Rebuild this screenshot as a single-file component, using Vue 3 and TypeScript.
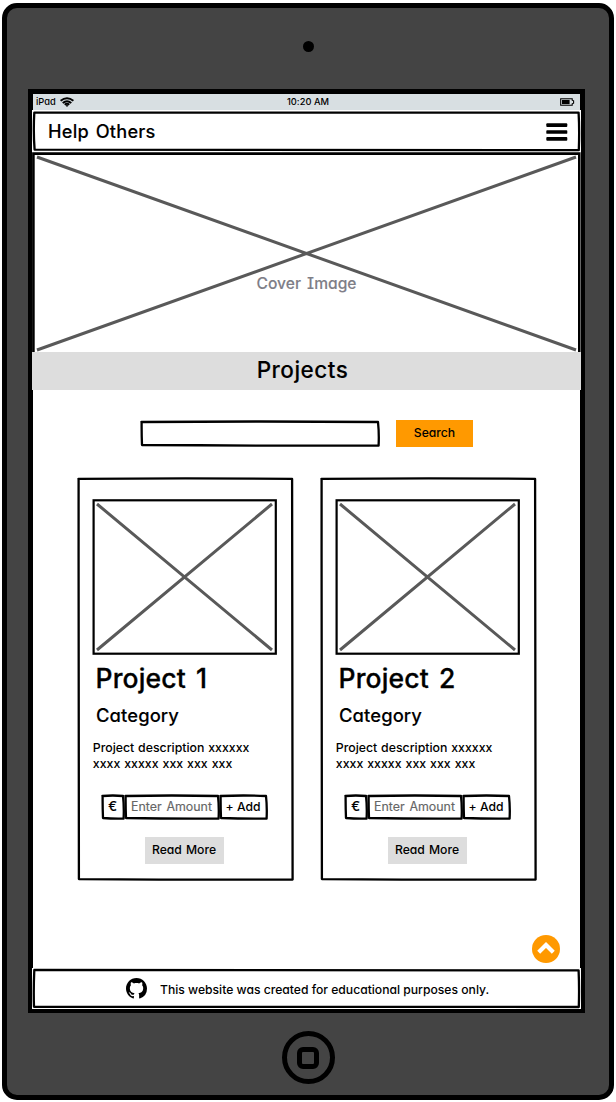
<script setup lang="ts">
interface Project {
  title: string
  category: string
  lines: string[]
}

const projects: Project[] = [
  { title: 'Project 1', category: 'Category', lines: ['Project description xxxxxx', 'xxxx xxxxx xxx xxx xxx'] },
  { title: 'Project 2', category: 'Category', lines: ['Project description xxxxxx', 'xxxx xxxxx xxx xxx xxx'] },
]

// Slightly uneven rectangle, like a hand-drawn frame.
function frame(w: number, h: number, wobble = 0.6): string {
  const k = wobble
  const r = w - 1.4
  const b = h - 1.4
  return [
    `M1.4 ${1.4 + k}`,
    `Q${w * 0.5} ${1.2 - k * 0.4} ${r - k} ${1.4 + k}`,
    `Q${r + k} ${h * 0.5} ${r} ${b}`,
    `Q${w * 0.5} ${b + k * 0.5} ${1.4 + k} ${b - k}`,
    `Q${1.4 + k * 0.2} ${h * 0.5} ${1.4 + k * 0.4} ${1.4 + k}Z`,
  ].join('')
}
</script>

<template>
  <div class="device">
    <div class="camera"></div>
    <div class="screen">
      <div class="status">
        <span class="carrier">iPad</span>
        <svg class="wifi" width="14" height="10" viewBox="0 0 14 10">
          <g fill="none" stroke="#000" stroke-width="1.9">
            <path d="M.6 3.8Q7-1.3 13.4 3.8" />
            <path d="M2.7 5.9Q7 2.4 11.3 5.9" />
            <path d="M4.7 7.8Q7 5.9 9.3 7.8" />
          </g>
          <path d="M5.6 8.4Q7 7.5 8.4 8.4L7 9.9Z" />
        </svg>
        <span class="clock">10:20 AM</span>
        <svg class="battery" width="15" height="8" viewBox="0 0 15 8">
          <path d="M1 .7H12.2V2.2L13.6 2.8V5.2L12.2 5.8V7.3H.7V.7Z" fill="none" stroke="#000" stroke-width="1.1" />
          <rect x="2" y="1.9" width="7.6" height="4.2" />
        </svg>
      </div>

      <header class="bar">
        <svg class="frame" width="549" height="42">
          <path d="M2.3 2.6Q270 1.6 546.6 2.6Q547.6 20 546.8 40.2Q270 41 2.6 39.6Q1.2 22 2.3 2.6Z" />
        </svg>
        <h1 class="brand">Help Others</h1>
        <svg class="burger" width="22" height="18" viewBox="0 0 22 18">
          <rect x=".3" y=".3" width="21" height="3.6" rx=".9" />
          <rect x=".3" y="7.2" width="21" height="3.6" rx=".9" />
          <rect x=".3" y="14.1" width="21" height="3.6" rx=".9" />
        </svg>
      </header>

      <section class="cover">
        <svg class="cross" width="549" height="200">
          <path class="edge" d="M1.4 200V1.6H547.3V200" />
          <path d="M5 5L544 198M5 198L544 5" />
        </svg>
        <span class="cover-label">Cover Image</span>
      </section>

      <h2 class="band"><span>Projects</span></h2>

      <form class="search" @submit.prevent>
        <div class="field">
          <svg class="frame" width="240" height="27"><path :d="frame(240, 27, 0.6)" /></svg>
        </div>
        <button class="go" type="submit"><span>Search</span></button>
      </form>

      <main class="cards">
        <article v-for="p in projects" :key="p.title" class="card">
          <svg class="frame" width="217" height="404"><path :d="frame(217, 404, 0.5)" /></svg>
          <svg class="thumb" width="185" height="156">
            <rect x="1.6" y="1.3" width="182.2" height="153.4" />
            <path d="M5 5L180 151M5 151L180 5" />
          </svg>
          <h3 class="title">{{ p.title }}</h3>
          <h4 class="category">{{ p.category }}</h4>
          <p class="text">
            <span v-for="(line, i) in p.lines" :key="i" :class="['line', { xs: i > 0 }]">{{ line }}</span>
          </p>
          <div class="donate">
            <span class="cell euro">
              <svg class="frame" width="24" height="26"><path :d="frame(24, 26, 0.6)" /></svg>€
            </span>
            <span class="cell amount">
              <svg class="frame" width="96" height="26"><path :d="frame(96, 26, 0.6)" /></svg>Enter Amount
            </span>
            <span class="cell add">
              <svg class="frame" width="49" height="26"><path :d="frame(49, 26, 0.6)" /></svg>+ Add
            </span>
          </div>
          <button class="more" type="button"><span>Read More</span></button>
        </article>
      </main>

      <button class="top" type="button" aria-label="Back to top">
        <svg width="28" height="28" viewBox="0 0 28 28">
          <circle cx="14" cy="14" r="14" fill="#ff9900" />
          <path d="M6.7 17.2L14 10L21.3 17.2" fill="none" stroke="#fff" stroke-width="4.2" />
        </svg>
      </button>

      <footer class="foot">
        <svg class="frame" width="549" height="41">
          <path d="M2.3 2Q270 1.4 546.6 2.4Q547.4 20 546.8 39Q270 40 2 38.8Q1.4 22 2.3 2Z" />
        </svg>
        <svg class="github" width="21" height="21" viewBox="0 0 16 16">
          <path d="M8 0C3.58 0 0 3.58 0 8c0 3.54 2.29 6.53 5.47 7.59.4.07.55-.17.55-.38 0-.19-.01-.82-.01-1.49-2.01.37-2.53-.49-2.69-.94-.09-.23-.48-.94-.82-1.13-.28-.15-.68-.52-.01-.53.63-.01 1.08.58 1.23.82.72 1.21 1.87.87 2.33.66.07-.52.28-.87.51-1.07-1.78-.2-3.64-.89-3.64-3.95 0-.87.31-1.59.82-2.15-.08-.2-.36-1.02.08-2.12 0 0 .67-.21 2.2.82.64-.18 1.32-.27 2-.27s1.36.09 2 .27c1.53-1.04 2.2-.82 2.2-.82.44 1.1.16 1.92.08 2.12.51.56.82 1.27.82 2.15 0 3.07-1.87 3.75-3.65 3.95.29.25.54.73.54 1.48 0 1.07-.01 1.93-.01 2.2 0 .21.15.46.55.38A8.01 8.01 0 0 0 16 8c0-4.42-3.58-8-8-8z" />
        </svg>
        <span class="note">This website was created for educational purposes only.</span>
      </footer>
    </div>
    <div class="home"><div class="home-square"></div></div>
  </div>
</template>

<style>
body {
  background: #fff;
}
</style>

<style scoped>
.device {
  box-sizing: border-box;
  width: 612px;
  height: 1097px;
  margin: 3px 0 0 2px;
  border: 5px solid #000;
  border-radius: 15px;
  background: #444;
  display: flex;
  flex-direction: column;
  align-items: center;
  color: #000;
  font-family: Inter, "Open Sans", sans-serif;
  font-feature-settings: "cv11", "cv08", "calt" 0;
  font-weight: 500;
  white-space: nowrap;
}
.device * {
  box-sizing: border-box;
}
h1, h2, h3, h4, p {
  margin: 0;
  font-weight: 500;
}
button {
  border: 0;
  padding: 0;
  color: inherit;
  font: inherit;
  font-feature-settings: inherit;
}
.camera {
  width: 11px;
  height: 11px;
  margin: 33px 0 0;
  border-radius: 50%;
  background: #000;
}
.screen {
  width: 557px;
  height: 924px;
  margin: 37px 0 0 -3px;
  border: 5px solid #000;
  background: #fff;
  display: flex;
  flex-direction: column;
  align-items: center;
}
.frame {
  position: absolute;
  left: 0;
  top: 0;
  fill: none;
  stroke: #000;
  stroke-width: 2.3;
  stroke-linejoin: round;
}
.status {
  width: 547px;
  height: 16px;
  flex: none;
  background: #d8dfe2;
  display: flex;
  align-items: center;
  padding: 0 5px 0 3px;
  font-size: 9.3px;
  line-height: 16px;
}
.carrier {
  width: 19px;
}
.wifi {
  margin-left: 5px;
}
.clock {
  margin-left: 213px;
}
.battery {
  margin-left: auto;
}
.bar {
  position: relative;
  width: 549px;
  height: 42px;
  flex: none;
  background: #fff;
  display: flex;
  align-items: center;
  justify-content: space-between;
  padding: 0 13px 0 16px;
}
.brand {
  font-size: 18.2px;
  line-height: 42px;
  letter-spacing: 0.2px;
  word-spacing: 1.8px;
  -webkit-text-stroke: 0.1px;
}
.burger {
  margin-top: 2px;
}
.cover {
  position: relative;
  width: 549px;
  height: 200px;
  flex: none;
  background: #fff;
  text-align: center;
}
.cross {
  display: block;
  fill: none;
  stroke: #595959;
  stroke-width: 3;
}
.cross .edge {
  stroke: #000;
  stroke-width: 2.6;
}
.cover-label {
  position: absolute;
  left: 0;
  right: 0;
  top: 122px;
  font-size: 15.6px;
  line-height: 20px;
  word-spacing: 2px;
  color: #7e7e87;
  -webkit-text-stroke: 0.1px;
}
.band {
  width: 549px;
  height: 38px;
  flex: none;
  background: #ddd;
  padding-right: 8px;
  text-align: center;
  font-size: 22.5px;
  line-height: 36px;
  letter-spacing: 0.5px;
  -webkit-text-stroke: 0.1px;
}
.search {
  display: flex;
  gap: 16px;
  margin-top: 30px;
}
.field {
  position: relative;
  width: 240px;
  height: 27px;
}
.go {
  width: 77px;
  height: 27px;
  padding-bottom: 2px;
  background: #ff9900;
  font-size: 12.2px;
  line-height: 25px;
}
.cards {
  display: flex;
  gap: 26px;
  margin-top: 30px;
}
.card {
  position: relative;
  width: 217px;
  height: 404px;
  padding: 22px 15px 0;
  display: flex;
  flex-direction: column;
}
.thumb {
  display: block;
  flex: none;
  fill: none;
  stroke: #595959;
  stroke-width: 3;
}
.thumb rect {
  stroke: #000;
  stroke-width: 2.2;
}
.title {
  margin: 5px 0 0 4px;
  font-size: 26.5px;
  line-height: 36px;
  letter-spacing: 0.15px;
  word-spacing: 3px;
  -webkit-text-stroke: 0.3px;
}
.category {
  margin: 5px 0 0 4.5px;
  font-size: 18.4px;
  line-height: 28px;
  letter-spacing: 0.1px;
  -webkit-text-stroke: 0.1px;
}
.text {
  margin: 11px 0 0 1.3px;
  font-size: 12.3px;
  line-height: 16px;
  word-spacing: 0.6px;
}
.line {
  display: block;
}
.xs {
  letter-spacing: 0.03px;
}
.donate {
  display: flex;
  margin: 22px 0 0 9px;
}
.cell {
  position: relative;
  height: 27px;
  font-size: 12.5px;
  line-height: 25px;
  text-align: center;
}
.euro {
  width: 23px;
  padding-left: 1px;
  font-size: 13px;
  -webkit-text-stroke: 0.2px;
}
.amount {
  width: 95px;
  padding-left: 1px;
  color: #666;
  font-weight: 400;
  font-size: 12.4px;
  word-spacing: 1.4px;
  -webkit-text-stroke: 0.15px;
}
.add {
  width: 49px;
  font-size: 12.2px;
}
.more {
  width: 79px;
  height: 27px;
  margin: 16px 0 0 53px;
  padding-bottom: 2px;
  background: #ddd;
  font-size: 12.2px;
  line-height: 25px;
  word-spacing: 0.8px;
}
.top {
  align-self: flex-end;
  height: 28px;
  margin: 54px 20px 0 0;
  background: none;
}
.top svg {
  display: block;
}
.foot {
  position: relative;
  width: 549px;
  height: 41px;
  margin-top: 5px;
  flex: none;
  background: #fff;
  display: flex;
  align-items: center;
  padding-left: 94px;
}
.note {
  margin: 2px 0 0 13px;
  font-size: 12.15px;
}
.home {
  width: 53px;
  height: 53px;
  margin: 18px 0 0;
  border: 5px solid #000;
  border-radius: 50%;
  display: flex;
  align-items: center;
  justify-content: center;
}
.home-square {
  width: 22px;
  height: 22px;
  border: 5px solid #000;
  border-radius: 6px;
}
</style>
